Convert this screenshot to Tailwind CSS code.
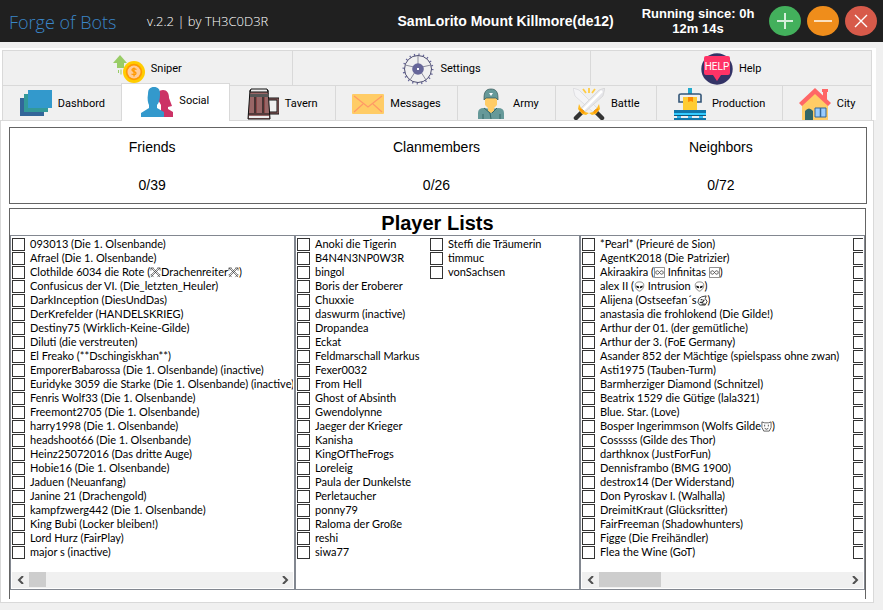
<!DOCTYPE html>
<html lang="en">
<head>
<meta charset="utf-8">
<meta name="viewport" content="width=device-width, initial-scale=1">
<title>Forge of Bots</title>
<script src="https://cdn.jsdelivr.net/npm/@tailwindcss/browser@4"></script>
</head>
<body class="min-h-screen bg-[#f0f0f0] font-['Liberation_Sans',Arial,sans-serif] text-black">
<header class="flex h-[42px] items-center bg-[#202020] pr-[6px] pl-[9px] text-white">
  <h1 class="w-[138px] shrink-0 pt-[2px] font-['Open_Sans','Noto_Sans',sans-serif] text-[18px] font-light whitespace-nowrap text-[#3a86c8]">Forge of Bots</h1>
  <p class="shrink-0 pt-[2px] font-['Open_Sans','Noto_Sans',sans-serif] text-[13px] font-light whitespace-nowrap">v.2.2 | by TH3C0D3R</p>
  <p class="flex-1 pl-[116px] text-center text-[14px] font-bold whitespace-nowrap">SamLorito Mount Killmore(de12)</p>
  <p class="w-[142px] shrink-0 pb-px text-center text-[13px] leading-[15px] font-bold">Running since: 0h<br>12m 14s</p>
  <div class="flex shrink-0 gap-[6px]">
    <button aria-label="Add" class="size-8"><svg viewBox="0 0 32 32" class="size-8"><ellipse cx="16" cy="16" rx="16" ry="15" fill="#43b05c"/><path d="M16 8v16M8 16h16" stroke="#d5efdb" stroke-width="2"/></svg></button>
    <button aria-label="Minimize" class="size-8"><svg viewBox="0 0 32 32" class="size-8"><ellipse cx="16" cy="16" rx="16" ry="15" fill="#ef8d1b"/><path d="M7 16h18" stroke="#fbe0be" stroke-width="2"/></svg></button>
    <button aria-label="Close" class="size-8"><svg viewBox="0 0 32 32" class="size-8"><ellipse cx="16" cy="16" rx="16" ry="15" fill="#d75a4a"/><path d="M10 10l12 12M22 10L10 22" stroke="#fff" stroke-width="1.4"/></svg></button>
  </div>
</header>

<div class="pt-[6px] pr-[7px]">
<nav class="bg-white pt-[2px] pr-[4px] pl-[2px] font-['Roboto',sans-serif] text-[11px]">
  <div class="grid h-[35px] grid-cols-[290fr_299fr_281fr] border-t border-l border-[#d9d9d9] bg-[#f0f0f0]">
    <button class="flex items-center justify-center gap-[6px] border-r border-[#d9d9d9] pt-[2px]">
      <svg viewBox="0 0 32 32" class="size-8"><path d="M7 2l7 8h-3v5H4v-5H0z" fill="#9c6"/><path d="M5.500 17v3M8 16.500v5" stroke="#9c6" stroke-width="1"/><circle cx="21" cy="19" r="11" fill="#fc0"/><circle cx="21" cy="19" r="8.200" fill="#f90"/><circle cx="21" cy="19" r="6.500" fill="#fc9"/><path d="M23.500 16.500q-4-2-4.500.5c0 2 4.500 1.500 4 3.500q-.5 2-4.500.5M21 14.500v9" fill="none" stroke="#f90" stroke-width="1.300"/></svg>
      Sniper</button>
    <button class="flex items-center justify-center gap-[6px] border-r border-[#d9d9d9] pt-[2px]">
      <svg viewBox="0 0 32 32" class="size-8"><circle cx="16" cy="16" r="14.500" fill="none" stroke="#669" stroke-width="2" stroke-dasharray="1.200 3.355"/><circle cx="16" cy="16" r="13.500" fill="none" stroke="#4d4d70" stroke-width="1"/><path d="M16 3v8M3 12l9 2M29 12l-9 2M8 27l5-8M24 27l-5-8" stroke="#8c8c9c" stroke-width="1"/><circle cx="16" cy="16" r="5.800" fill="#669"/><path d="M15 15h2v2h-2z" fill="#fff"/></svg>
      Settings</button>
    <button class="flex items-center justify-center gap-[6px] border-r border-[#d9d9d9] pt-[2px]">
      <svg viewBox="0 0 32 32" class="size-8"><circle cx="16" cy="16" r="15.700" fill="#336"/><path d="M5 3h22a2 2 0 0 1 2 2v15a2 2 0 0 1-2 2h-7l-4 6-4-6H5a2 2 0 0 1-2-2V5a2 2 0 0 1 2-2z" fill="#f36"/><text x="16" y="17" text-anchor="middle" font-family="Roboto, sans-serif" font-size="10" fill="#fff">HELP</text></svg>
      Help</button>
  </div>
  <div class="grid h-[35px] grid-cols-[119fr_108fr_106fr_123fr_98fr_101fr_126fr_89fr] border-t border-l border-[#d9d9d9] bg-[#f0f0f0]">
    <button class="flex items-center justify-center gap-[6px] pt-[2px]">
      <svg viewBox="0 0 32 32" class="size-8"><path d="M0 10h24v18H0z" fill="#369"/><path d="M4 6h24v18H4z" fill="#399"/><path d="M8 2h24v18H8z" fill="#39c"/></svg>
      Dashbord</button>
    <button aria-current="page" class="relative -mt-[3px] -mb-px -ml-px flex items-center justify-center gap-[6px] border-x border-t border-[#d9d9d9] bg-white pb-[2px]">
      <svg viewBox="0 0 32 32" class="size-8"><path d="M16 12c0-5 2-8 6-8s6 3 6 8l3 8-4 1v2l5 3v5H20V19z" fill="#c36"/><path d="M7 8c0-5 2-7 6-7s6 2 6 7c0 5-1 9-3 11v3l7 4v5H0v-4l8-5v-3c-1-2-2-6-1-11z" fill="#39c"/></svg>
      Social</button>
    <button class="flex items-center justify-center gap-[6px] border-r border-[#d9d9d9] pt-[2px]">
      <svg viewBox="0 0 32 32" class="size-8"><path d="M22 11h9v14h-9" fill="none" stroke="#111" stroke-width="3"/><path d="M22 11h9v14h-9" fill="none" stroke="#966" stroke-width="1.200"/><path d="M3 2h18l2 29H1z" fill="#966" stroke="#111"/><path d="M4 1h16l1 3H3z" fill="#eee" stroke="#111"/><path d="M3 6h19v3H3z" fill="#555"/><path d="M1 26h22M8 9v16M16 9v16" stroke="#111" stroke-width="1.200"/><path d="M9.500 9v16M17.500 9v16" stroke="#844"/><path d="M2 28h20v2H2z" fill="#eee"/></svg>
      Tavern</button>
    <button class="flex items-center justify-center gap-[6px] border-r border-[#d9d9d9] pt-[2px]">
      <svg viewBox="0 0 32 32" class="size-8"><rect y="6" width="32" height="20" rx="1" fill="#fc6"/><path d="M2 8l14 11L30 8M2 24l9-8M30 24l-9-8" fill="none" stroke="#f96" stroke-width="1.200"/></svg>
      Messages</button>
    <button class="flex items-center justify-center gap-[6px] border-r border-[#d9d9d9] pt-[2px]">
      <svg viewBox="0 0 32 32" class="size-8"><path d="M3 31v-6q0-5 6-5l7 1 7-1q6 0 6 5v6z" fill="#699"/><path d="M10 9h12v8l-3 3v3l-3 2-3-2v-3l-3-3z" fill="#fc6"/><path d="M9 10c0-6 2-9 7-9s7 3 7 9v2l-2-2H11l-2 2z" fill="#699" stroke="#355" stroke-width=".7"/><path d="M14 5h4l-2 3z" fill="#fff"/><path d="M9 20l6 5 1 6M22 20l-5 5M8 26v5M25 26v5" fill="none" stroke="#366"/></svg>
      Army</button>
    <button class="flex items-center justify-center gap-[6px] border-r border-[#d9d9d9] pt-[2px]">
      <svg viewBox="0 0 32 32" class="size-8"><path d="M0 0l6 2 18 18-4 4L2 8z" fill="#f4f4f6" stroke="#d2d2d6" stroke-width=".6"/><path d="M32 0l-6 2L8 20l4 4L30 8z" fill="#e6e6ea" stroke="#ccc" stroke-width=".6"/><path d="M29 3L10 22" stroke="#fff" stroke-width="2.500"/><path d="M9 24l-6 6M23 24l6 6" stroke="#333" stroke-width="4.500" stroke-linecap="round"/><path d="M6 16l2 4 4 4 4 1-3 2-4-1-4-5zM26 16l-2 4-4 4-4 1 3 2 4-1 4-5z" fill="#fb2"/><path d="M7 21l4 4M25 21l-4 4" stroke="#f90" stroke-width="2"/><path d="M16 0v5M10 1l3 4M22 1l-3 4" stroke="#fc4" stroke-width="1.800"/></svg>
      Battle</button>
    <button class="flex items-center justify-center gap-[6px] border-r border-[#d9d9d9] pt-[2px]">
      <svg viewBox="0 0 32 32" class="size-8"><path d="M16 0v6" stroke="#2ac" stroke-width="4"/><path d="M9 14H5V7q0-1 2-1h18q2 0 2 1v7h-4" fill="none" stroke="#357" stroke-width="1.600"/><path d="M9 9h14v13H9z" fill="#fc3"/><path d="M14 9h5v5l-2-1-3 1z" fill="#f80"/><path d="M0 22h32v3H0z" fill="#17a"/><path d="M0 25h32v2H0z" fill="#3cf"/><path d="M0 27h32v1H0z" fill="#157"/><path d="M0 30h32v2H0z" fill="#17a"/><path d="M5 28v2M16 28v2M27 28v2" stroke="#3be" stroke-width="4"/></svg>
      Production</button>
    <button class="flex items-center justify-center gap-[6px] border-r border-[#d9d9d9] pt-[2px]">
      <svg viewBox="0 0 32 32" class="size-8"><path d="M23 1h6v3h-1v10l-4-4V4h-1z" fill="#f66"/><path d="M3 15L16 3l13 12v17H3z" fill="#fc6"/><path d="M16 0l16 15-3 3L16 6 3 18l-3-3z" fill="#f66"/><path d="M6 32v-9q4-5 8 0v9z" fill="#366"/><path d="M16 20h11v9H16z" fill="#9cf" stroke="#369"/><path d="M21.500 20v9" stroke="#369" stroke-width="1.500"/></svg>
      City</button>
  </div>
</nav>
</div>

<main class="mr-[9px] border border-[#d9d9d9] bg-white pt-[6px] pr-[6px] pb-[3px] pl-[8px]">
  <dl class="grid h-[77px] grid-cols-3 border border-[#646464] pr-[3px] text-center text-[14px] leading-[16px]">
    <div class="flex flex-col gap-[22px] pt-[11px]"><dt>Friends</dt><dd>0/39</dd></div>
    <div class="flex flex-col gap-[22px] pt-[11px]"><dt>Clanmembers</dt><dd>0/26</dd></div>
    <div class="flex flex-col gap-[22px] pt-[11px]"><dt>Neighbors</dt><dd>0/72</dd></div>
  </dl>
  <section class="mt-[4px] mr-px border-x border-t border-[#646464] pb-[9px]">
    <h2 class="h-[26px] text-center text-[20px] leading-[28px] font-bold">Player Lists</h2>
    <div class="grid grid-cols-3 font-['Lato','Roboto',sans-serif] text-[11px] leading-[14px]">
      <div class="flex h-[355px] min-w-0 flex-col justify-between border border-[#828790] p-px">
        <ul id="friends" class="grid auto-cols-[290px] grid-flow-col grid-rows-[repeat(23,14px)] overflow-hidden"></ul>
        <div class="flex h-[16px] items-center bg-[#f0f0f0]">
          <button aria-label="Scroll left" class="flex w-[17px] justify-center"><svg viewBox="0 0 8 8" class="size-2"><path d="M6 0L2 4l4 4" fill="none" stroke="#505050" stroke-width="2"/></svg></button>
          <div class="h-full flex-1"><div class="h-[15px] w-[17px] bg-[#cdcdcd]"></div></div>
          <button aria-label="Scroll right" class="flex w-[17px] justify-center"><svg viewBox="0 0 8 8" class="size-2"><path d="M2 0l4 4-4 4" fill="none" stroke="#505050" stroke-width="2"/></svg></button>
        </div>
      </div>
      <div class="h-[355px] min-w-0 border border-[#828790] p-px">
        <ul id="clan" class="grid auto-cols-[133px] grid-flow-col grid-rows-[repeat(23,14px)] overflow-hidden"></ul>
      </div>
      <div class="flex h-[355px] min-w-0 flex-col justify-between border border-[#828790] p-px">
        <ul id="neighbors" class="grid auto-cols-[271px] grid-flow-col grid-rows-[repeat(23,14px)] overflow-hidden"></ul>
        <div class="flex h-[16px] items-center bg-[#f0f0f0]">
          <button aria-label="Scroll left" class="flex w-[17px] justify-center"><svg viewBox="0 0 8 8" class="size-2"><path d="M6 0L2 4l4 4" fill="none" stroke="#505050" stroke-width="2"/></svg></button>
          <div class="h-full flex-1"><div class="h-[15px] w-[62px] bg-[#cdcdcd]"></div></div>
          <button aria-label="Scroll right" class="flex w-[17px] justify-center"><svg viewBox="0 0 8 8" class="size-2"><path d="M2 0l4 4-4 4" fill="none" stroke="#505050" stroke-width="2"/></svg></button>
        </div>
      </div>
    </div>
  </section>
</main>
<script>
const svg = (body) => `<svg viewBox="0 0 12 12" class="inline size-[11px] align-[-2px]" fill="none" stroke="#333" aria-hidden="true">${body}</svg>`;
const icons = {
  swords: svg('<path d="M1 1l10 10M11 1L1 11M1 4V1h3M8 1h3v3M1 8l3 3M11 8l-3 3M3 1l8 8M9 1L1 9" stroke-width=".7"/>'),
  infinity: svg('<path d="M.5.5h11v11H.5z" stroke="#666" stroke-width=".8"/><path d="M6 6c-2-3-4-2-4 0s2 3 4 0 4-2 4 0-2 3-4 0z" stroke-width=".9"/>'),
  alien: svg('<path d="M6 1c4 0 5 2 4.500 5S7 11 6 11 2 9 1.500 6 2 1 6 1z" stroke="#777"/><path d="M2.500 5l3 1v2C3 8 2.500 7 2.500 5zM9.500 5l-3 1v2c2.500 0 3-1 3-3z" fill="#111" stroke="none"/>'),
  dragon: svg('<path d="M2 4l3-2 5-1-1 3 2 3-2 4H3L1 8z"/><path d="M3 8h3l2-3M5 10h4M4 5h2" stroke-width="1.300"/>'),
  wolf: svg('<path d="M1 1l3 1h4l3-1v6l-2 4H3L1 7z" stroke-width=".8"/><path d="M4 4v2M8 4v2M4 8l2 1 2-1" stroke-width=".9"/>')
};
const lists = {
  friends: ["093013 (Die 1. Olsenbande)","Afrael (Die 1. Olsenbande)","Clothilde 6034 die Rote ({swords}Drachenreiter{swords})","Confusicus der VI. (Die_letzten_Heuler)","DarkInception (DiesUndDas)","DerKrefelder (HANDELSKRIEG)","Destiny75 (Wirklich-Keine-Gilde)","Diluti (die verstreuten)","El Freako (**Dschingiskhan**)","EmporerBabarossa (Die 1. Olsenbande) (inactive)","Euridyke 3059 die Starke (Die 1. Olsenbande) (inactive)","Fenris Wolf33 (Die 1. Olsenbande)","Freemont2705 (Die 1. Olsenbande)","harry1998 (Die 1. Olsenbande)","headshoot66 (Die 1. Olsenbande)","Heinz25072016 (Das dritte Auge)","Hobie16 (Die 1. Olsenbande)","Jaduen (Neuanfang)","Janine 21 (Drachengold)","kampfzwerg442 (Die 1. Olsenbande)","King Bubi (Locker bleiben!)","Lord Hurz (FairPlay)","major s (inactive)"],
  clan: ["Anoki die Tigerin","B4N4N3NP0W3R","bingol","Boris der Eroberer","Chuxxie","daswurm (inactive)","Dropandea","Eckat","Feldmarschall Markus","Fexer0032","From Hell","Ghost of Absinth","Gwendolynne","Jaeger der Krieger","Kanisha","KingOfTheFrogs","Loreleig","Paula der Dunkelste","Perletaucher","ponny79","Raloma der Große","reshi","siwa77","Steffi die Träumerin","timmuc","vonSachsen"],
  neighbors: ["*Pearl* (Prieuré de Sion)","AgentK2018 (Die Patrizier)","Akiraakira ({infinity} Infinitas {infinity})","alex II ({alien} Intrusion {alien})","Alijena (Ostseefan´s{dragon})","anastasia die frohlokend (Die Gilde!)","Arthur der 01. (der gemütliche)","Arthur der 3. (FoE Germany)","Asander 852 der Mächtige (spielspass ohne zwan)","Asti1975 (Tauben-Turm)","Barmherziger Diamond (Schnitzel)","Beatrix 1529 die Gütige (lala321)","Blue. Star. (Love)","Bosper Ingerimmson (Wolfs Gilde{wolf})","Cosssss (Gilde des Thor)","darthknox (JustForFun)","Dennisframbo (BMG 1900)","destrox14 (Der Widerstand)","Don Pyroskav I. (Walhalla)","DreimitKraut (Glücksritter)","FairFreeman (Shadowhunters)","Figge (Die Freihändler)","Flea the Wine (GoT)"].concat(Array(23).fill(""))
};
for (const [id, names] of Object.entries(lists)) {
  document.getElementById(id).innerHTML = names.map((name) => `<li><label class="flex h-[14px] items-center gap-[5px] whitespace-nowrap"><input type="checkbox" ${name ? "" : 'aria-label="Neighbor"'} class="size-[13px] shrink-0 appearance-none border border-[#333] bg-white checked:bg-[#333]"><span>${name.replace(/\{(\w+)\}/g, (m, key) => icons[key])}</span></label></li>`).join("");
}
</script>
</body>
</html>
